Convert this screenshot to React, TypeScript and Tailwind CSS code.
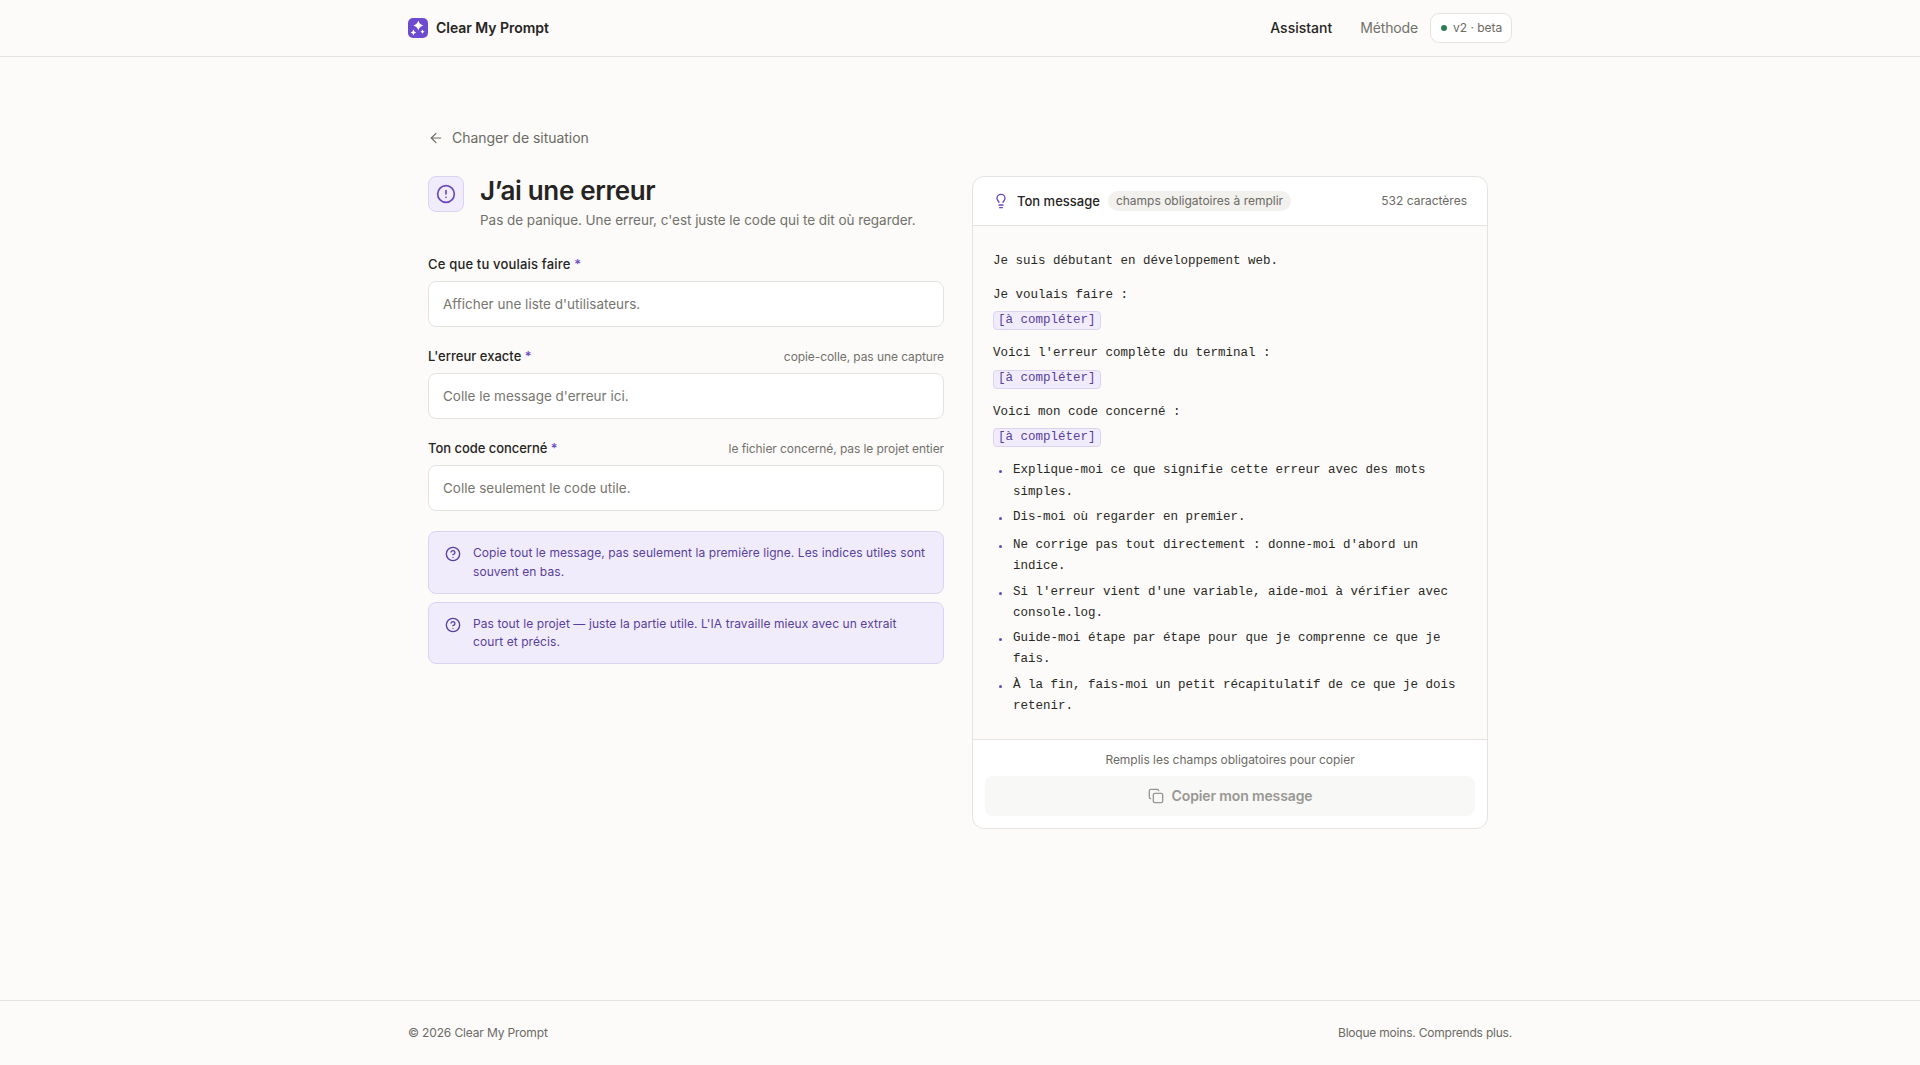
import React from 'react';
import { ArrowLeft, CircleAlert, CircleHelp, Copy, Lightbulb } from 'lucide-react';

const fields = [
  { label: 'Ce que tu voulais faire', hint: '', placeholder: "Afficher une liste d'utilisateurs.", tracking: 'tracking-[0.18px]' },
  { label: "L'erreur exacte", hint: 'copie-colle, pas une capture', placeholder: "Colle le message d'erreur ici.", tracking: 'tracking-[0.02px]' },
  { label: 'Ton code concerné', hint: 'le fichier concerné, pas le projet entier', placeholder: 'Colle seulement le code utile.', tracking: 'tracking-[-0.04px]' },
];

const tips = [
  ['Copie tout le message, pas seulement la première ligne. Les indices utiles sont', 'souvent en bas.'],
  ["Pas tout le projet — juste la partie utile. L'IA travaille mieux avec un extrait", 'court et précis.'],
];

const sections = ['Je voulais faire :', "Voici l'erreur complète du terminal :", 'Voici mon code concerné :'];

const rules = [
  'Explique-moi ce que signifie cette erreur avec des mots simples.',
  'Dis-moi où regarder en premier.',
  "Ne corrige pas tout directement : donne-moi d'abord un indice.",
  "Si l'erreur vient d'une variable, aide-moi à vérifier avec console.log.",
  'Guide-moi étape par étape pour que je comprenne ce que je fais.',
  'À la fin, fais-moi un petit récapitulatif de ce que je dois retenir.',
];

const Logo: React.FC = () => (
  <svg width="20" height="20" viewBox="0 0 20 20">
    <rect width="20" height="20" rx="5" fill="#6d4bd0" />
    <g fill="#fff">
      <path d="M10.3 2.6Q11.3 6.6 15.4 7.6Q11.3 8.6 10.3 12.6Q9.3 8.6 5.2 7.6Q9.3 6.6 10.3 2.6Z" />
      <path d="M5.4 11.6Q5.9 14 8.2 14.5Q5.9 15 5.4 17.4Q4.9 15 2.6 14.5Q4.9 14 5.4 11.6Z" />
      <path d="M14.5 11.6Q14.9 13.3 16.6 13.7Q14.9 14.1 14.5 15.8Q14.1 14.1 12.4 13.7Q14.1 13.3 14.5 11.6Z" />
    </g>
  </svg>
);

const Header: React.FC = () => (
  <header className="h-[57px] border-b border-[#e4e3df]">
    <div className="mx-auto flex h-full w-[1104px] items-center justify-between">
      <div className="flex items-center gap-2">
        <Logo />
        <span className="text-sm font-semibold tracking-[-0.04px]">Clear My Prompt</span>
      </div>
      <nav className="flex items-center text-sm">
        <a className="font-medium">Assistant</a>
        <a className="ml-7 tracking-[-0.15px] text-[#72716b]">Méthode</a>
        <span className="ml-3 flex h-[30px] w-[82px] items-center gap-1.5 rounded-[9px] border border-[#e4e3df] bg-white px-2.5 text-xs whitespace-nowrap text-[#6b6a64]">
          <i className="size-1.5 shrink-0 rounded-full bg-[#2f7d55]" />
          v2 · beta
        </span>
      </nav>
    </div>
  </header>
);

const Form: React.FC = () => (
  <section className="w-[516px]">
    <div className="flex gap-4">
      <div className="flex size-9 shrink-0 items-center justify-center rounded-lg border border-[#dcd3f3] bg-[#f1ecfb] text-[#6847bf]">
        <CircleAlert size={20} strokeWidth={2} />
      </div>
      <div>
        <h1 className="text-[26px] leading-[30px] font-semibold tracking-[-0.35px]">J’ai une erreur</h1>
        <p className="mt-1 text-[13.5px] leading-5 tracking-[-0.03px] whitespace-nowrap text-[#72716b]">
          Pas de panique. Une erreur, c'est juste le code qui te dit où regarder.
        </p>
      </div>
    </div>
    <div className="mt-6 flex flex-col gap-[19px]">
      {fields.map((f) => (
        <div key={f.label}>
          <div className="flex h-[27px] items-start justify-between">
            <label className={`text-[13px] leading-5 font-medium ${f.tracking}`}>
              {f.label} <span className="text-[#6847bf]">*</span>
            </label>
            <span className="text-xs leading-[22px] tracking-[-0.08px] text-[#72716b]">{f.hint}</span>
          </div>
          <input
            className="block h-[46px] w-full rounded-lg border border-[#e4e3df] bg-white px-[14px] text-[13.5px] placeholder:text-[#77766f]"
            placeholder={f.placeholder}
          />
        </div>
      ))}
    </div>
    <div className="mt-5 flex flex-col gap-2">
      {tips.map(([a, b]) => (
        <div key={a} className="flex h-[62.5px] items-start gap-3 rounded-lg border border-[#dcd3f3] bg-[#f1ecfb] px-4 pt-3 text-xs leading-[18.6px] tracking-[0.08px] whitespace-nowrap text-[#583f9d]">
          <CircleHelp size={16} strokeWidth={2} className="mt-0.5 shrink-0" />
          <p>
            {a}
            <br />
            {b}
          </p>
        </div>
      ))}
    </div>
  </section>
);

const Preview: React.FC = () => (
  <section className="w-[516px] overflow-hidden rounded-xl border border-[#e4e3df] bg-white">
    <div className="flex h-[49px] items-center border-b border-[#e4e3df] px-5">
      <Lightbulb size={16} strokeWidth={2} className="text-[#6847bf]" />
      <span className="ml-2 pt-px text-[13px] font-medium">Ton message</span>
      <span className="ml-2 flex h-5 items-center rounded-full bg-[#f2f1ed] px-2 text-xs text-[#6b6a64]">champs obligatoires à remplir</span>
      <span className="ml-auto text-xs text-[#6b6a64]">532 caractères</span>
    </div>
    <div className="h-[513px] bg-[#fcfbf9] px-5 pt-[25.3px] font-['Liberation_Mono',monospace] text-[12.5px] leading-[21.25px] text-[#292825]">
      <p>Je suis débutant en développement web.</p>
      {sections.map((s) => (
        <div key={s} className="mt-3 h-[46.6px]">
          <p>{s}</p>
          <p className="flex h-[25.4px] items-center pt-1">
            <mark className="flex h-[19px] items-center rounded-[4px] border border-[#dcd3f3] bg-[#f1ecfb] px-1 text-[#583f9d]">[à compléter]</mark>
          </p>
        </div>
      ))}
      <ul className="mt-3 flex flex-col gap-1">
        {rules.map((r) => (
          <li key={r} className="flex min-h-[24.2px]">
            <i className="mt-[10px] mr-[11px] ml-[6px] size-[3px] shrink-0 rounded-full bg-[#6847bf]" />
            <span className="w-[456px]">{r}</span>
          </li>
        ))}
      </ul>
    </div>
    <div className="border-t border-[#e4e3df] p-3">
      <p className="mb-2 text-center text-xs leading-4 tracking-[-0.03px] text-[#6b6a64]">Remplis les champs obligatoires pour copier</p>
      <button className="flex h-10 w-full items-center justify-center gap-2 rounded-lg bg-[#f8f8f6] text-sm font-semibold tracking-[-0.13px] text-[#989793]" disabled>
        <Copy size={16} strokeWidth={2} />
        Copier mon message
      </button>
    </div>
  </section>
);

const App: React.FC = () => (
  <div className="flex h-[1065px] flex-col bg-[#fcfbf9] font-['Inter',sans-serif] text-[#252422]">
    <Header />
    <main className="mx-auto w-[1104px] flex-1 px-5 pt-[71px]">
      <a className="flex h-5 items-center gap-2 text-sm tracking-[-0.03px] text-[#6b6a64]">
        <ArrowLeft size={16} strokeWidth={1.75} />
        Changer de situation
      </a>
      <div className="mt-7 flex items-start gap-7">
        <Form />
        <Preview />
      </div>
    </main>
    <footer className="h-[65px] border-t border-[#e4e3df]">
      <div className="mx-auto flex h-full w-[1104px] items-center justify-between text-xs text-[#6b6a64]">
        <span className="tracking-[-0.14px]">© 2026 Clear My Prompt</span>
        <span className="tracking-[-0.21px]">Bloque moins. Comprends plus.</span>
      </div>
    </footer>
  </div>
);

export default App;
